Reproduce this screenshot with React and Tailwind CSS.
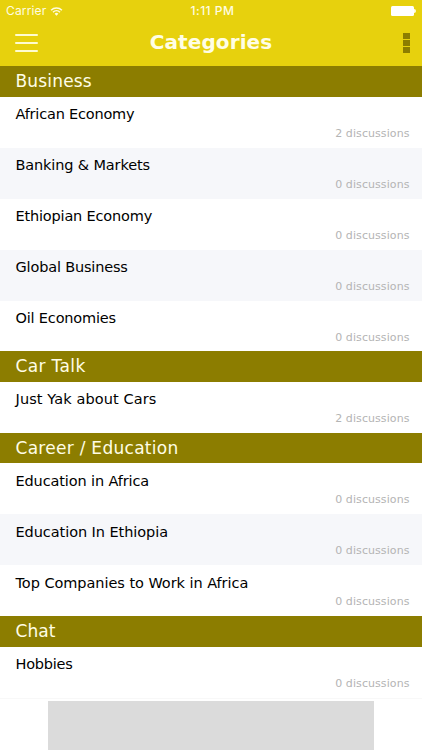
import React from "react";

const sections = [
  {
    title: "Business",
    spacing: "tracking-[0.18px]",
    items: [
      { name: "African Economy", count: 2, spacing: "tracking-[-0.2px]" },
      { name: "Banking & Markets", count: 0, spacing: "tracking-[-0.14px]" },
      { name: "Ethiopian Economy", count: 0, spacing: "tracking-[-0.18px]" },
      { name: "Global Business", count: 0, spacing: "tracking-[-0.17px]" },
      { name: "Oil Economies", count: 0, spacing: "tracking-[-0.18px]" },
    ],
  },
  {
    title: "Car Talk",
    spacing: "tracking-[0.36px]",
    items: [
      { name: "Just Yak about Cars", count: 2, spacing: "tracking-[0.1px]" },
    ],
  },
  {
    title: "Career / Education",
    spacing: "tracking-[0.28px]",
    items: [
      { name: "Education in Africa", count: 0, spacing: "tracking-[-0.13px]" },
      { name: "Education In Ethiopia", count: 0, spacing: "tracking-[-0.07px]" },
      {
        name: "Top Companies to Work in Africa",
        count: 0,
        spacing: "tracking-[-0.05px]",
      },
    ],
  },
  {
    title: "Chat",
    spacing: "tracking-[0.1px]",
    items: [{ name: "Hobbies", count: 0, spacing: "tracking-[-0.25px]" }],
  },
];

const WifiIcon = () => (
  <svg width="13" height="9" viewBox="0 0 12 9" fill="none" stroke="#fffde0">
    <path d="M0.6 3.3a7.6 7.6 0 0 1 10.8 0" strokeWidth="1.5" />
    <path d="M2.5 5.2a5 5 0 0 1 7 0" strokeWidth="1.5" />
    <path d="M6 8.8L4.1 6.8a2.7 2.7 0 0 1 3.8 0z" fill="#fffde0" stroke="none" />
  </svg>
);

const StatusBar = () => (
  <div className="grid grid-cols-3 items-center h-[22px] pl-[6px] pr-[6px] font-[Inter,sans-serif] text-[12px] text-[#fffde0]">
    <div className="flex items-center gap-[4px] tracking-[0.15px]">
      <span>Carrier</span>
      <WifiIcon />
    </div>
    <span className="pl-[3px] text-center font-medium tracking-[0.5px]">
      1:11 PM
    </span>
    <div className="flex items-center justify-end">
      <span className="w-[23px] h-[10px] rounded-[1.5px] bg-white" />
      <span className="w-[2px] h-[4px] rounded-r-full bg-[#fffde0]" />
    </div>
  </div>
);

const Header = () => (
  <header className="h-[66.3px] bg-[#e7d10d]">
    <StatusBar />
    <div className="flex items-center justify-between h-[42px] pl-[15px] pr-[12px]">
      <button className="flex flex-col gap-[6px] w-[23px]">
        <span className="h-[2px] rounded-full bg-[#fffcd0]" />
        <span className="h-[2px] rounded-full bg-[#fffcd0]" />
        <span className="h-[2px] rounded-full bg-[#fffcd0]" />
      </button>
      <h1 className="pr-[3px] text-[20px] leading-[40px] pb-[2px] font-bold tracking-[0.1px] text-[#fffee6]">
        Categories
      </h1>
      <button className="flex flex-col items-end gap-[1px] w-[23px]">
        <span className="w-[7px] h-[6px] bg-[#8c7d00]" />
        <span className="w-[7px] h-[6px] bg-[#8c7d00]" />
        <span className="w-[7px] h-[6px] bg-[#8c7d00]" />
      </button>
    </div>
  </header>
);

const CategoryRow = ({ name, count, spacing }) => (
  <li className="flex flex-col h-[50.95px] pl-[15.5px] pr-[12.5px] pt-[7.4px] odd:bg-white even:bg-[#f6f7fa]">
    <span className={`text-[14.5px] leading-[20px] text-black ${spacing}`}>
      {name}
    </span>
    <span className="self-end pt-[0.6px] text-[11px] leading-[17px] tracking-[0.08px] text-[#b4b4b4]">
      {count} discussions
    </span>
  </li>
);

const App = () => {
  return (
    <div className="flex flex-col w-[422px] h-[750px] overflow-hidden bg-white font-['DejaVu_Sans',Verdana,sans-serif]">
      <Header />
      <main>
        {sections.map((section) => (
          <section key={section.title}>
            <h2
              className={`h-[30.5px] pl-[15.5px] text-[17px] leading-[31px] text-[#fffde6] bg-[#8c7d00] ${section.spacing}`}
            >
              {section.title}
            </h2>
            <ul>
              {section.items.map((item) => (
                <CategoryRow key={item.name} {...item} />
              ))}
            </ul>
          </section>
        ))}
      </main>
      <footer className="flex flex-1 justify-center border-t border-[#f8f8f8] pt-[2px]">
        <div className="w-[326px] bg-[#dbdbdb]" />
      </footer>
    </div>
  );
};

export default App;
